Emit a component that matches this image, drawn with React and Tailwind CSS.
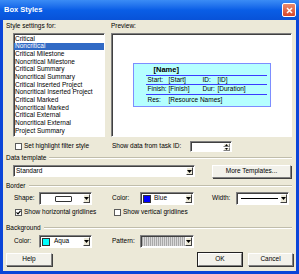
import React from "react";

const styleNames = [
  "Critical",
  "Noncritical",
  "Critical Milestone",
  "Noncritical Milestone",
  "Critical Summary",
  "Noncritical Summary",
  "Critical Inserted Project",
  "Noncritical Inserted Project",
  "Critical Marked",
  "Noncritical Marked",
  "Critical External",
  "Noncritical External",
  "Project Summary",
];

const sunken =
  "border border-t-[#808080] border-l-[#808080] border-b-white border-r-white shadow-[inset_1px_1px_0_#404040]";

const Arrow = () => (
  <div className="w-[7px] h-full bg-[#ece9d8] border border-t-white border-l-white border-b-[#404040] border-r-[#404040] flex items-center justify-center">
    <svg width="5" height="3" viewBox="0 0 5 3">
      <path d="M0 0 L5 0 L2.5 3 Z" fill="#000" />
    </svg>
  </div>
);

const Combo = ({ className, children }) => (
  <div className={`bg-white flex items-stretch p-[1px] ${sunken} ${className}`}>
    <div className="flex-1 flex items-center overflow-hidden">{children}</div>
    <Arrow />
  </div>
);

const CheckBox = ({ checked }) => (
  <div className="w-[7px] h-[7px] bg-white border border-[#5a5a5a] flex items-center justify-center">
    {checked && (
      <svg width="5" height="5" viewBox="0 0 5 5">
        <path d="M0.5 2.3 L2 3.8 L4.6 0.8" stroke="#000" strokeWidth="1.2" fill="none" />
      </svg>
    )}
  </div>
);

const GroupLabel = ({ children, className }) => (
  <div className={`flex items-center h-[8px] pl-[3px] pr-[4px] ${className}`}>
    <span>{children}</span>
    <div className="flex-1 ml-[3px] border-t border-t-[#c0bdab] border-b border-b-white" />
  </div>
);

const Button = ({ className, children, isDefault }) => (
  <div
    className={`h-[13px] flex items-center justify-center bg-[#f2f1ea] border border-t-white border-l-white border-b-[#808080] border-r-[#808080] ${
      isDefault
        ? "outline outline-1 outline-[#222]"
        : "shadow-[1px_1px_0_#404040]"
    } ${className}`}
  >
    {children}
  </div>
);

const PreviewRow = ({ children, className }) => (
  <div className={`flex items-center border-b border-b-[#3b3bff] mr-[3px] ${className}`}>
    {children}
  </div>
);

export default function App() {
  return (
    <div className="w-[299px] h-[274px] bg-[#0b45d8] flex flex-col font-['Liberation_Sans',Arial,sans-serif] text-[6.5px] text-black leading-none">
      <div className="h-[20px] bg-gradient-to-b from-[#3b8cf5] via-[#0a5ee6] to-[#0852d8] flex items-center justify-between pl-[4px] pr-[3px]">
        <span className="text-white font-bold text-[7.5px]">Box Styles</span>
        <div className="w-[14px] h-[14px] rounded-[2px] border border-white bg-gradient-to-b from-[#e98a6c] to-[#d6452a] flex items-center justify-center">
          <svg width="7" height="7" viewBox="0 0 7 7">
            <path d="M1 1 L6 6 M6 1 L1 6" stroke="#fff" strokeWidth="1.5" />
          </svg>
        </div>
      </div>

      <div className="flex-1 mx-[3px] mb-[3px] bg-[#ece9d8] flex flex-col">
        <div className="h-[13px] flex items-center">
          <span className="ml-[3px] w-[105px]">Style settings for:</span>
          <span>Preview:</span>
        </div>

        <div className="h-[104px] flex">
          <div className={`ml-[10px] w-[92px] bg-white pt-[1px] ${sunken}`}>
            {styleNames.map((name, i) => (
              <div
                key={name}
                className={`h-[7.7px] flex items-center px-[1px] ${
                  i === 1 ? "bg-[#316ac5] text-white" : ""
                }`}
              >
                {name}
              </div>
            ))}
          </div>
          <div className={`ml-[6px] w-[181px] bg-white flex items-center justify-center ${sunken}`}>
            <div className="w-[138px] h-[44px] bg-[#b5ffff] border border-[#7d8dff] pt-[1px] pl-[12px] flex flex-col">
              <PreviewRow className="h-[11px] pl-[8px] font-bold text-[7.5px]">[Name]</PreviewRow>
              <PreviewRow className="h-[9px] pl-[2px]">
                <span className="w-[21px]">Start:</span>
                <span className="w-[34px]">[Start]</span>
                <span className="w-[15px]">ID:</span>
                <span>[ID]</span>
              </PreviewRow>
              <PreviewRow className="h-[10px] pl-[2px]">
                <span className="w-[21px]">Finish:</span>
                <span className="w-[34px]">[Finish]</span>
                <span className="w-[15px]">Dur:</span>
                <span>[Duration]</span>
              </PreviewRow>
              <div className="flex-1 flex items-center pl-[2px]">
                <span className="w-[21px]">Res:</span>
                <span>[Resource Names]</span>
              </div>
            </div>
          </div>
        </div>

        <div className="mt-[4px] h-[11px] flex items-center">
          <div className="ml-[12px]">
            <CheckBox />
          </div>
          <span className="ml-[2px] w-[88px]">Set highlight filter style</span>
          <span className="w-[78px]">Show data from task ID:</span>
          <div className={`w-[42px] h-[11px] bg-white flex items-stretch p-[1px] ${sunken}`}>
            <div className="flex-1" />
            <div className="w-[7px] flex flex-col">
              <div className="flex-1 bg-[#ece9d8] border border-t-white border-l-white border-b-[#808080] border-r-[#808080] flex items-center justify-center">
                <svg width="3" height="2" viewBox="0 0 3 2">
                  <path d="M0 2 L3 2 L1.5 0 Z" fill="#000" />
                </svg>
              </div>
              <div className="flex-1 bg-[#ece9d8] border border-t-white border-l-white border-b-[#808080] border-r-[#808080] flex items-center justify-center">
                <svg width="3" height="2" viewBox="0 0 3 2">
                  <path d="M0 0 L3 0 L1.5 2 Z" fill="#000" />
                </svg>
              </div>
            </div>
          </div>
        </div>

        <GroupLabel className="mt-[2px]">Data template</GroupLabel>

        <div className="mt-[3px] h-[12px] flex">
          <Combo className="ml-[10px] w-[182px]">
            <span className="pl-[1px]">Standard</span>
          </Combo>
          <Button className="ml-[17px] w-[79px] h-[12px]">More Templates...</Button>
        </div>

        <GroupLabel className="mt-[5px]">Border</GroupLabel>

        <div className="mt-[2px] h-[13px] flex items-center">
          <span className="ml-[11px] w-[25px]">Shape:</span>
          <Combo className="w-[53px] h-[13px]">
            <div className="ml-[14px] w-[17px] h-[6px] border border-[#333] rounded-[1px]" />
          </Combo>
          <span className="ml-[20px] w-[28px]">Color:</span>
          <Combo className="w-[54px] h-[13px]">
            <div className="ml-[1px] w-[8px] h-[8px] bg-[#0000ff] border border-[#333]" />
            <span className="ml-[3px]">Blue</span>
          </Combo>
          <span className="ml-[18px] w-[24px]">Width:</span>
          <Combo className="w-[53px] h-[13px]">
            <div className="ml-[3px] w-[37px] border-t border-t-black" />
          </Combo>
        </div>

        <div className="mt-[3px] h-[8px] flex items-center">
          <div className="ml-[12px]">
            <CheckBox checked />
          </div>
          <span className="ml-[2px] w-[90px]">Show horizontal gridlines</span>
          <CheckBox />
          <span className="ml-[2px]">Show vertical gridlines</span>
        </div>

        <GroupLabel className="mt-[8px]">Background</GroupLabel>

        <div className="mt-[3px] h-[13px] flex items-center">
          <span className="ml-[11px] w-[25px]">Color:</span>
          <Combo className="w-[53px] h-[13px]">
            <div className="ml-[1px] w-[8px] h-[8px] bg-[#00ffff] border border-[#333]" />
            <span className="ml-[4px]">Aqua</span>
          </Combo>
          <span className="ml-[20px] w-[28px]">Pattern:</span>
          <Combo className="w-[54px] h-[13px]">
            <div className="w-full h-full bg-[repeating-linear-gradient(90deg,#a9a9a9_0px,#a9a9a9_1px,#d9d9d9_1px,#d9d9d9_2px)]" />
          </Combo>
        </div>

        <div className="mt-[5px] flex items-center">
          <Button className="ml-[3px] w-[46px]">Help</Button>
          <Button className="ml-[146px] w-[44px]" isDefault>
            OK
          </Button>
          <Button className="ml-[6px] w-[45px]">Cancel</Button>
        </div>
      </div>
    </div>
  );
}
